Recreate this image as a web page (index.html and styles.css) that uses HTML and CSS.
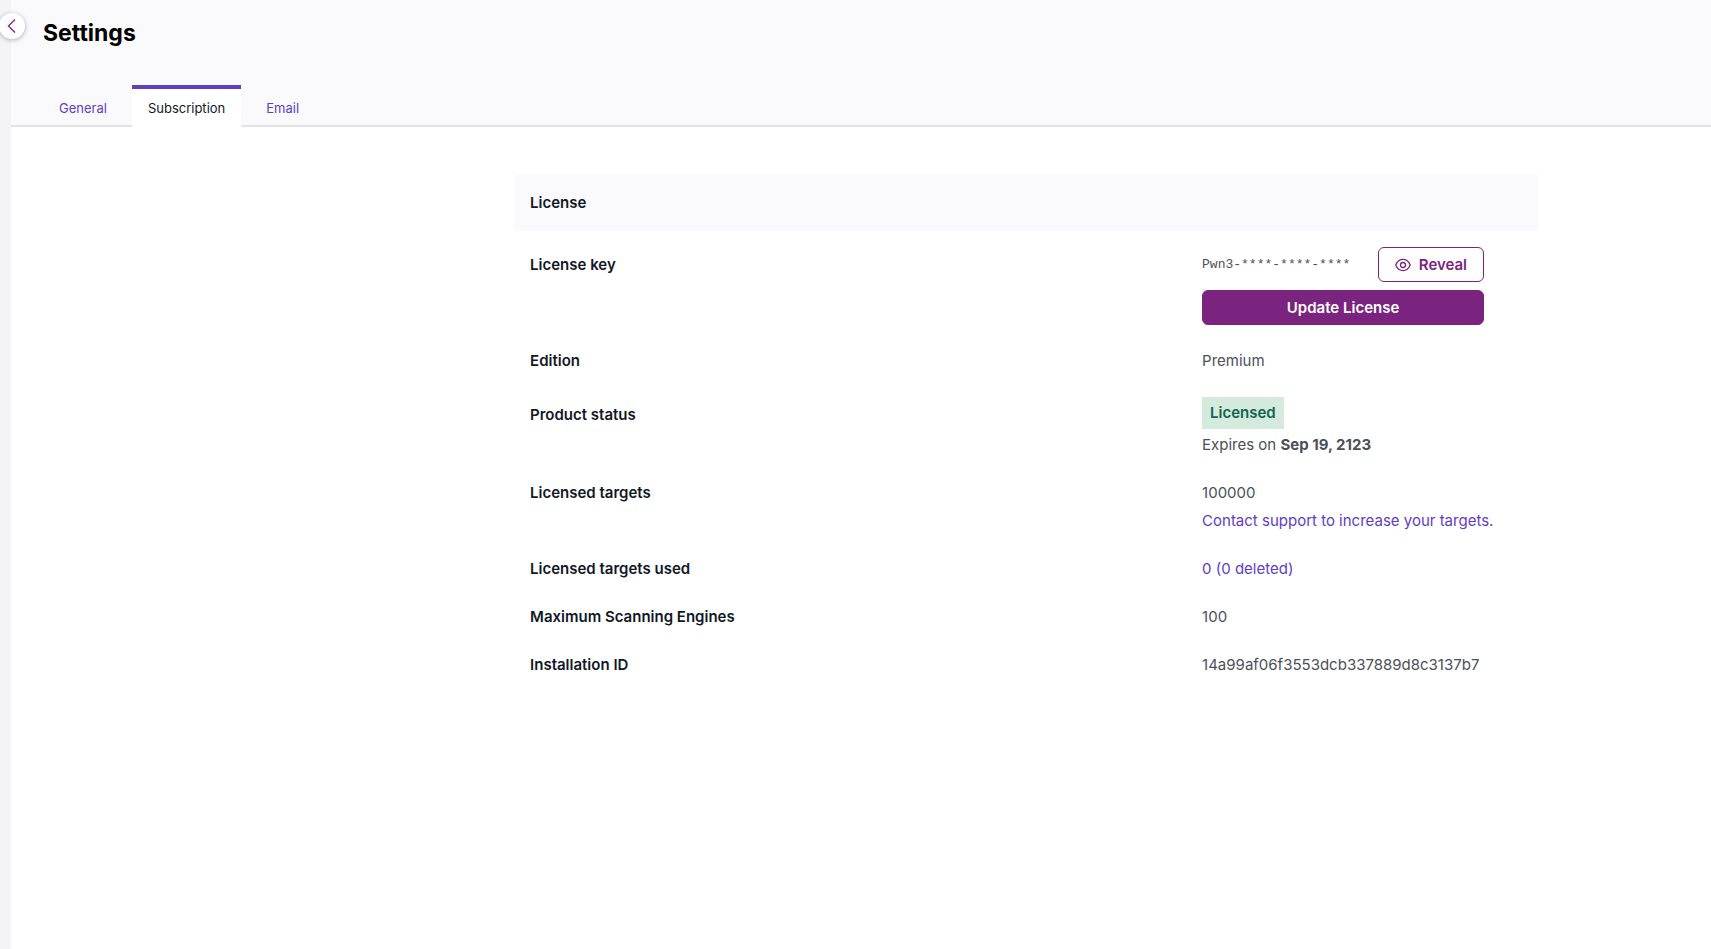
FILE: index.html
```html
<!DOCTYPE html>
<html lang="en">
<head>
    <meta charset="UTF-8">
    <meta name="viewport" content="width=device-width, initial-scale=1.0">
    <title>Settings - Subscription</title>
    <link rel="stylesheet" href="styles.css">
</head>
<body>
    <aside class="sidebar">
        <button class="sidebar-toggle" type="button" aria-label="Expand menu">
            <svg width="10" height="16" viewBox="0 0 10 16" fill="none" stroke="currentColor" stroke-width="1.3">
                <path d="M8 1.500L1.500 8 8 14.500"/>
            </svg>
        </button>
    </aside>

    <div class="page">
        <header class="page-header">
            <h1>Settings</h1>
            <nav class="tabs">
                <a href="#general" class="tab">General</a>
                <a href="#subscription" class="tab active" aria-current="page">Subscription</a>
                <a href="#email" class="tab">Email</a>
            </nav>
        </header>

        <main class="content">
            <table class="license-table">
                <colgroup>
                    <col class="col-label">
                    <col>
                </colgroup>
                <thead>
                    <tr>
                        <th colspan="2">License</th>
                    </tr>
                </thead>
                <tbody>
                    <tr class="control-row">
                        <th scope="row">License key</th>
                        <td>
                            <div class="license-actions">
                                <div class="license-key">
                                    <code>Pwn3-****-****-****</code>
                                    <button class="btn btn-outline" type="button">
                                        <svg width="16" height="14" viewBox="0 0 16 14" fill="none" stroke="currentColor" stroke-width="1.3">
                                            <path d="M.7 7C2.3 3.400 4.900 1.400 8 1.400S13.700 3.400 15.300 7C13.700 10.600 11.100 12.600 8 12.600S2.300 10.600.7 7z"/>
                                            <circle cx="8" cy="7" r="2.500"/>
                                        </svg>
                                        Reveal
                                    </button>
                                </div>
                                <button class="btn btn-primary" type="button">Update License</button>
                            </div>
                        </td>
                    </tr>
                    <tr>
                        <th scope="row">Edition</th>
                        <td>Premium</td>
                    </tr>
                    <tr class="control-row">
                        <th scope="row">Product status</th>
                        <td>
                            <div class="stack">
                                <span class="badge">Licensed</span>
                                <span>Expires on <strong>Sep 19, 2123</strong></span>
                            </div>
                        </td>
                    </tr>
                    <tr>
                        <th scope="row">Licensed targets</th>
                        <td>
                            <div class="stack">
                                <span>100000</span>
                                <a href="#support">Contact support to increase your targets.</a>
                            </div>
                        </td>
                    </tr>
                    <tr>
                        <th scope="row">Licensed targets used</th>
                        <td><a href="#targets">0 (0 deleted)</a></td>
                    </tr>
                    <tr>
                        <th scope="row">Maximum Scanning Engines</th>
                        <td>100</td>
                    </tr>
                    <tr>
                        <th scope="row">Installation ID</th>
                        <td>14a99af06f3553dcb337889d8c3137b7</td>
                    </tr>
                </tbody>
            </table>
        </main>
    </div>
</body>
</html>
```
FILE: styles.css
```css
:root {
    --bg-header: #fafafc;
    --bg-sidebar: #f4f4f7;
    --text-heading: #111827;
    --text-primary: #4b5059;
    --link-color: #5f3dc4;
    --accent-color: #7a2480;
    --border-color: #e3e3e6;
    --success-bg: #d3eadc;
    --success-text: #11644f;
}

* {
    margin: 0;
    padding: 0;
    box-sizing: border-box;
}

body {
    display: flex;
    min-height: 100vh;
    background-color: #fff;
    color: var(--text-primary);
    font-family: Inter, "Liberation Sans", sans-serif;
    font-size: 15px;
    line-height: 24px;
}

a {
    color: var(--link-color);
    text-decoration: none;
}

a:hover {
    text-decoration: underline;
}

.sidebar {
    position: relative;
    flex: 0 0 11px;
    background-color: var(--bg-sidebar);
}

/* sits over the edge between sidebar and page */
.sidebar-toggle {
    position: absolute;
    top: 13px;
    right: -14px;
    display: flex;
    align-items: center;
    justify-content: center;
    width: 26px;
    height: 26px;
    border: none;
    border-radius: 50%;
    background-color: #fff;
    color: var(--accent-color);
    box-shadow: 0 1px 5px rgba(0, 0, 0, 0.3);
    cursor: pointer;
}

.page {
    flex: 1;
    min-width: 0;
}

.page-header {
    padding: 17px 32px 0;
    background-color: var(--bg-header);
    box-shadow: inset 0 -2px 0 var(--border-color);
}

.page-header h1 {
    margin-bottom: 36px;
    color: #000;
    font-size: 23px;
    font-weight: 700;
    line-height: 32px;
}

.tabs {
    display: flex;
}

.tab {
    padding: 9px 16px;
    border-top: 4px solid transparent;
    font-size: 13px;
    line-height: 20px;
}

.tab.active {
    margin: 0 9px;
    border-top-color: var(--link-color);
    background-color: #fff;
    color: var(--text-heading);
}

.content {
    display: grid;
    grid-template-columns: 32fr minmax(0, 1024px) 11fr;
    padding: 48px 0;
}

.license-table {
    grid-column: 2;
    table-layout: fixed;
    width: 100%;
    border-spacing: 0;
    text-align: left;
}

.col-label {
    width: 672px;
}

.license-table th,
.license-table td {
    padding: 12px 16px;
    vertical-align: top;
}

.license-table th {
    color: var(--text-heading);
    font-weight: 600;
}

.license-table thead th {
    padding: 16px;
    border-bottom: 4px solid #fff;
    background-color: var(--bg-header);
}

.control-row th {
    line-height: 36px;
}

.license-actions {
    display: flex;
    flex-direction: column;
    gap: 8px;
    max-width: 282px;
}

.license-key {
    display: flex;
    align-items: center;
    justify-content: space-between;
}

.license-key code {
    font-family: "Liberation Mono", monospace;
    font-size: 13px;
}

.btn {
    display: flex;
    align-items: center;
    justify-content: center;
    gap: 8px;
    height: 35px;
    padding: 0 16px;
    border: 1px solid var(--accent-color);
    border-radius: 6px;
    font-family: inherit;
    font-size: 15px;
    font-weight: 600;
    cursor: pointer;
}

.btn-primary {
    background-color: var(--accent-color);
    color: #fff;
}

.btn-outline {
    background-color: #fff;
    color: var(--accent-color);
}

.stack {
    display: flex;
    flex-direction: column;
    align-items: flex-start;
    gap: 4px;
}

.badge {
    padding: 4px 8px;
    background-color: var(--success-bg);
    color: var(--success-text);
    font-weight: 600;
}
```
